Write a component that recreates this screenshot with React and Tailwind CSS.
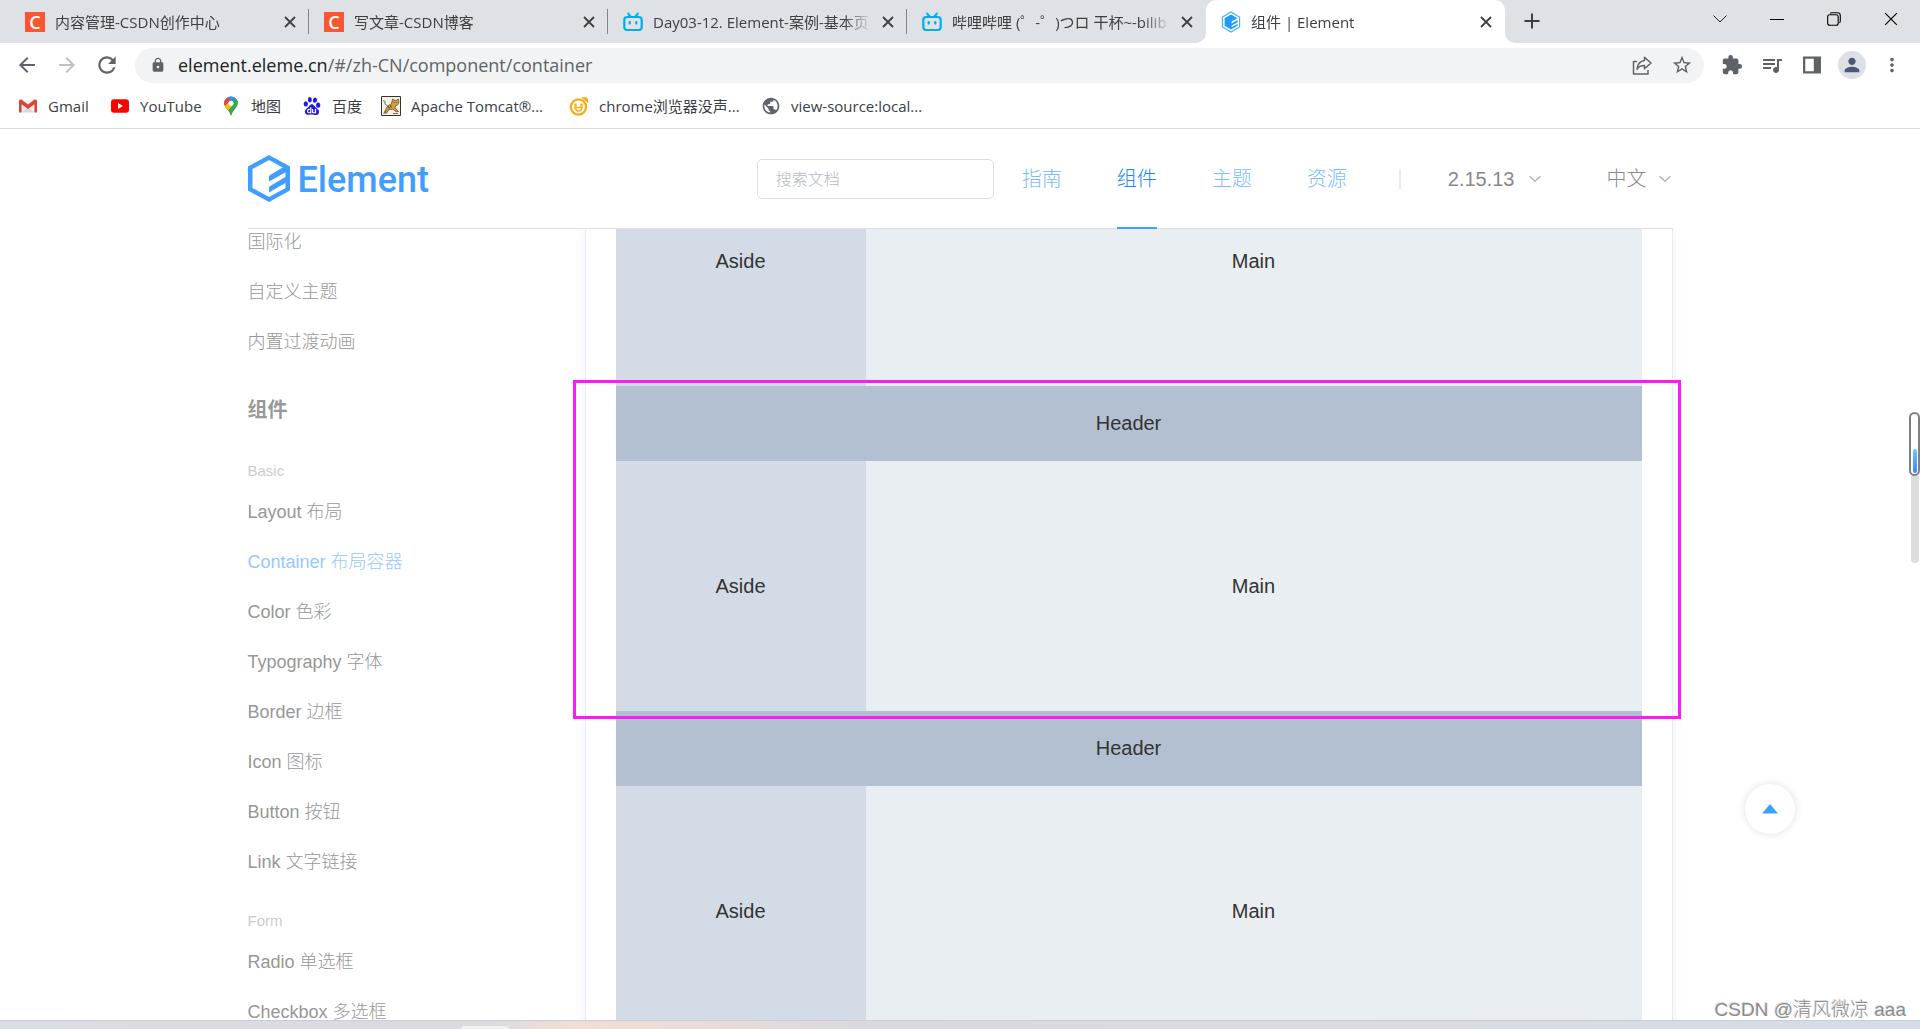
import React from "react";
import {
  MdArrowBack,
  MdArrowForward,
  MdRefresh,
  MdLock,
  MdStarBorder,
  MdExtension,
  MdQueueMusic,
  MdPerson,
  MdMoreVert,
  MdPublic,
} from "react-icons/md";
import { SiBaidu } from "react-icons/si";

const uiFont = "font-['Open_Sans','Noto_Sans_CJK_SC',sans-serif]";
const pageFont = "font-['Liberation_Sans','Noto_Sans_CJK_SC',sans-serif]";

/* ---------- small drawings ---------- */

function CsdnIcon() {
  return (
    <span className="flex size-5 shrink-0 items-center justify-center bg-[#fc5531] font-['Open_Sans',sans-serif] text-lg leading-5 font-semibold text-white">
      C
    </span>
  );
}

function BilibiliIcon() {
  return (
    <svg viewBox="0 0 20 20" className="size-5 shrink-0" fill="none" stroke="#00aeec" strokeWidth="2.2" strokeLinecap="round">
      <rect x="1.3" y="5" width="17.4" height="13" rx="3" />
      <path d="M5.2 1.6 7.6 4.6M14.8 1.6 12.4 4.6M6.7 10v1.6M13.3 10v1.6" />
    </svg>
  );
}

function ElementIcon() {
  return (
    <svg viewBox="0 0 20 22" className="h-[22px] w-5 shrink-0">
      <path d="M10 1 18.6 6v10L10 21 1.4 16V6Z" fill="#fff" stroke="#3fb0ff" strokeWidth="1.1" />
      <path d="M10 3.4 16.4 7.2 10.6 10.6v1.8l6-3.4v2.3l-6 3.4v1.6l6-3.3v1.8L10 18.6 3.6 14.8V7.2Z" fill="#1e9bff" />
    </svg>
  );
}

function GmailIcon() {
  return (
    <svg viewBox="0 0 20 20" className="size-5">
      <path d="M2 4h16v12.5H2z" fill="#f2f2f2" />
      <path d="M4 16.5 10 10l6 6.5z" fill="#d9d9d9" />
      <path d="M1 5v11.5h2.6V8.2L10 13l6.4-4.8v8.3H19V5c0-1.6-1.7-2-2.8-1.2L10 8.6 3.8 3.8C2.7 3 1 3.4 1 5Z" fill="#dc4437" />
    </svg>
  );
}

function YoutubeIcon() {
  return (
    <svg viewBox="0 0 20 20" className="size-5">
      <rect x="1" y="3.3" width="18" height="13.4" rx="3" fill="#f00" />
      <path d="M8 7v6l5-3z" fill="#fff" />
    </svg>
  );
}

function MapsIcon() {
  return (
    <svg viewBox="0 0 20 20" className="size-5">
      <clipPath id="pin">
        <path d="M10 .5a6.8 6.8 0 0 0-6.8 6.8c0 2.7 1.4 4 3 6 1.5 2 2.6 3.3 3.2 5.6.3.9.9.9 1.2 0 .6-2.3 1.7-3.6 3.2-5.6 1.6-2 3-3.3 3-6A6.8 6.8 0 0 0 10 .5Z" />
      </clipPath>
      <g clipPath="url(#pin)">
        <path d="M0 0h20v20H0z" fill="#34a853" />
        <path d="M12 0h8v7l-6-1z" fill="#4285f4" />
        <path d="M4 2 11-1l3 3-8 8-4-3z" fill="#4285f4" />
        <path d="M0 0h5.5L9 5 2 12z" fill="#ea4335" />
        <path d="M2 12 15 3l3 4L6 16z" fill="#34a853" />
        <path d="M2 12 8 6l4 3-6 7z" fill="#fbbc04" />
      </g>
      <circle cx="10" cy="7.3" r="2.5" fill="#fff" />
    </svg>
  );
}

function TomcatIcon() {
  return (
    <svg viewBox="0 0 20 20" className="size-5">
      <path d="M.5.5h19v19H.5z" fill="#f4f1e6" stroke="#333" />
      <path d="M11 5.5 11.5 3l2 1.3h2.2L17.5 3l.3 3.2c0 2-1.500 3.200-3 3.500l-.8 2 3.500 3.800-2.500.3-3-2.600-4 .3-2.500 3.700-2.500-.2 2.300-4.500c.5-2 2.200-3.200 5-4.500z" fill="#d2a041" stroke="#54431f" strokeWidth=".7" />
      <path d="M13 6v.8M15.8 6v.8M7.5 10.5l.8 2M9.5 9.5l.8 2" stroke="#222" strokeWidth=".9" />
      <path d="M2 5c1.5-1 2.500.5 2 2s1 2 3 3M2.500 17.500l3-3M12 17.500h5" fill="none" stroke="#66604a" strokeWidth=".9" />
    </svg>
  );
}

function OrangeFaceIcon() {
  return (
    <svg viewBox="0 0 20 20" className="size-5" fill="none" stroke="#fbab18">
      <circle cx="9.5" cy="11" r="7.6" strokeWidth="2.2" />
      <path d="M13 1.5 18 2l.8 4.5z" fill="#fbab18" />
      <path d="M6.5 7.5v3M12.5 7.5v3" strokeWidth="2.4" />
      <path d="M5 11.5h9M6.3 12c.5 4 5.900 4 6.400 0" strokeWidth="1.6" />
    </svg>
  );
}

function ShareIcon() {
  return (
    <svg viewBox="0 0 22 22" className="size-[22px]" fill="none" stroke="#5f6368" strokeWidth="1.5" strokeLinejoin="round">
      <path d="M6 7.5H2.5V20H17v-4" />
      <path d="M13.5 3.2 20 9l-6.5 5.8V11.6c-3.5 0-5.700 1-7.500 3.600.5-4.500 3-8 7.500-8.600z" />
    </svg>
  );
}

function SidePanelIcon() {
  return (
    <svg viewBox="0 0 20 20" className="size-5">
      <path d="M1 1.5h18v17H1zM3.3 3.8v12.4h8.5V3.8z" fill="#5f6368" fillRule="evenodd" />
    </svg>
  );
}

function Cross({ className, width }) {
  return (
    <svg viewBox="0 0 12 12" className={className} stroke="currentColor" strokeWidth={width}>
      <path d="m1 1 10 10M11 1 1 11" />
    </svg>
  );
}

function Chevron() {
  return (
    <svg viewBox="0 0 12 8" className="h-2 w-3" fill="none" stroke="#aaa" strokeWidth="1.2">
      <path d="m.6 1.2 5.4 5 5.4-5" />
    </svg>
  );
}

/* ---------- browser chrome ---------- */

const tabs = [
  { title: "内容管理-CSDN创作中心", icon: <CsdnIcon /> },
  { title: "写文章-CSDN博客", icon: <CsdnIcon /> },
  { title: "Day03-12. Element-案例-基本页", icon: <BilibiliIcon /> },
  { title: "哔哩哔哩 (゜-゜)つロ 干杯~-bilib", icon: <BilibiliIcon />, last: true },
  { title: "组件 | Element", icon: <ElementIcon />, active: true },
];

function Tab({ tab }) {
  return (
    <div
      className={
        "relative flex h-[43px] w-[299px] min-w-0 items-center pr-[9px] pl-[15px] " +
        (tab.active ? "rounded-t-[10px] bg-white" : "")
      }
    >
      {tab.active && (
        <>
          <span className="absolute bottom-0 -left-2.5 size-2.5 bg-white" />
          <span className="absolute bottom-0 -left-2.5 size-2.5 rounded-br-[10px] bg-[#dee1e6]" />
          <span className="absolute -right-2.5 bottom-0 size-2.5 bg-white" />
          <span className="absolute -right-2.5 bottom-0 size-2.5 rounded-bl-[10px] bg-[#dee1e6]" />
        </>
      )}
      {tab.icon}
      <span className="ml-2.5 min-w-0 flex-1 overflow-hidden text-[15px] leading-6 whitespace-nowrap text-[#3c4043] [mask-image:linear-gradient(to_right,black_calc(100%-28px),transparent)]">
        {tab.title}
      </span>
      <button type="button" aria-label="关闭标签页" className="ml-1.5 flex size-5 items-center justify-center text-[#3c4043]">
        <Cross className="size-3" width="1.8" />
      </button>
      {!tab.active && !tab.last && <span className="absolute top-[9px] right-0 h-[25px] w-px bg-[#80868b]" />}
    </div>
  );
}

function WindowButton({ label, children }) {
  return (
    <button type="button" aria-label={label} className="flex h-[38px] w-[57px] items-center justify-center">
      {children}
    </button>
  );
}

function TabStrip() {
  return (
    <div className="flex h-[43px] justify-between bg-[#dee1e6]">
      <div className="flex min-w-0 pl-[10px]">
        {tabs.map((t) => (
          <Tab key={t.title} tab={t} />
        ))}
        <button type="button" aria-label="新标签页" className="ml-[11px] flex h-[42px] w-8 items-center justify-center">
          <svg viewBox="0 0 16 16" className="size-4" stroke="#3c4043" strokeWidth="2">
            <path d="M8 .5v15M.5 8h15" />
          </svg>
        </button>
      </div>
      <div className="flex pr-px">
        <WindowButton label="搜索标签页">
          <svg viewBox="0 0 14 8" className="h-2 w-3.5" fill="none" stroke="#222">
            <path d="m.5.5 6.5 6.5L13.5.5" />
          </svg>
        </WindowButton>
        <WindowButton label="最小化">
          <span className="h-px w-3.5 bg-black" />
        </WindowButton>
        <WindowButton label="还原">
          <svg viewBox="0 0 14 14" className="size-3.5" fill="none" stroke="#000" strokeWidth="1.1">
            <rect x=".7" y="2.7" width="10.5" height="10.5" rx="2" />
            <path d="M3.2 1.5C3.6.9 4.2.7 5 .7h5.5c1.8 0 2.8 1 2.8 2.8V9c0 .8-.3 1.4-.9 1.8" />
          </svg>
        </WindowButton>
        <WindowButton label="关闭">
          <Cross className="size-3.5" width="1" />
        </WindowButton>
      </div>
    </div>
  );
}

function ToolButton({ label, children }) {
  return (
    <button type="button" aria-label={label} className="flex size-10 shrink-0 items-center justify-center text-[#5f6368]">
      {children}
    </button>
  );
}

function Toolbar() {
  return (
    <div className="flex h-11 items-center bg-white pr-2 pl-[7px]">
      <ToolButton label="后退"><MdArrowBack className="size-6" /></ToolButton>
      <ToolButton label="前进"><MdArrowForward className="size-6 text-[#bdc1c6]" /></ToolButton>
      <ToolButton label="重新加载"><MdRefresh className="size-[26px]" /></ToolButton>
      <div className="ml-2 flex h-[35px] min-w-0 flex-1 items-center rounded-full bg-[#f1f3f4] pr-0.5 pl-[15px]">
        <MdLock className="size-4 text-[#5f6368]" />
        <div className="ml-3 flex-1 truncate text-[18px] leading-7 text-[#5f6368]">
          <span className="text-[#202124]">element.eleme.cn</span>/#/zh-CN/component/container
        </div>
        <ToolButton label="分享"><ShareIcon /></ToolButton>
        <ToolButton label="收藏"><MdStarBorder className="size-[22px]" /></ToolButton>
      </div>
      <div className="ml-2 flex">
        <ToolButton label="扩展程序"><MdExtension className="size-[22px]" /></ToolButton>
        <ToolButton label="媒体控件"><MdQueueMusic className="size-6" /></ToolButton>
        <ToolButton label="侧边栏"><SidePanelIcon /></ToolButton>
        <ToolButton label="用户">
          <span className="flex size-7 items-center justify-center rounded-full bg-[#dde1e7] text-[#4a5a74]">
            <MdPerson className="size-[22px]" />
          </span>
        </ToolButton>
        <ToolButton label="菜单"><MdMoreVert className="size-[22px]" /></ToolButton>
      </div>
    </div>
  );
}

const bookmarks = [
  { label: "Gmail", icon: <GmailIcon />, w: "w-[92px]" },
  { label: "YouTube", icon: <YoutubeIcon />, w: "w-[111px]" },
  { label: "地图", icon: <MapsIcon />, w: "w-[81px]" },
  { label: "百度", icon: <SiBaidu className="size-[18px] text-[#2319dc]" />, w: "w-[79px]" },
  { label: "Apache Tomcat®...", icon: <TomcatIcon />, w: "w-[188px]" },
  { label: "chrome浏览器没声...", icon: <OrangeFaceIcon />, w: "w-[192px]" },
  { label: "view-source:local...", icon: <MdPublic className="size-[22px] text-[#5f6368]" />, w: "w-[180px]" },
];

function BookmarkBar() {
  return (
    <nav className="flex h-[42px] items-center border-b border-[#d9dbde] bg-white pb-1 pl-[18px]">
      {bookmarks.map((b) => (
        <a key={b.label} href="#" className={"flex shrink-0 items-center whitespace-nowrap " + b.w}>
          <span className="flex w-5 justify-center">{b.icon}</span>
          <span className="ml-2.5 text-[15px] leading-6 text-[#3c4043]">{b.label}</span>
        </a>
      ))}
    </nav>
  );
}

/* ---------- documentation page ---------- */

function Logo() {
  return (
    <a href="#" className="flex items-center text-[#409eff]" aria-label="Element">
      <svg viewBox="0 0 42 47" className="h-[47px] w-[42px]" fill="currentColor">
        <path fillRule="evenodd" d="M21 0 42 11.5V35.5L21 47 0 35.5V11.5ZM21 5 4.5 14V33L21 42 37.5 33V14Z" />
        <path d="M21 22.5C21 21 21.6 20.2 23 19.4L35.5 12 39 13V16.500L21 26.500ZM21 33.500C21 32 21.600 31.200 23 30.400L39 21V27L21 37.500Z" />
      </svg>
      <span className="mt-0.5 ml-2 font-['Roboto',sans-serif] text-[36px] leading-10 font-medium">Element</span>
    </a>
  );
}

const navLinks = ["指南", "组件", "主题", "资源"];

function SiteHeader() {
  return (
    <header className="mx-auto flex h-[100px] w-full max-w-[1425px] shrink-0 items-center justify-between border-b border-[#dcdfe6]">
      <Logo />
      <div className="flex h-full items-center pr-0.5 text-[20px] font-light">
        <input
          type="text"
          aria-label="搜索文档"
          placeholder="搜索文档"
          className="h-10 w-[237px] rounded-[5px] border border-[#dcdfe6] px-[18px] pt-0.5 text-[16px] placeholder:text-[#b4b9c2]"
        />
        <nav className="ml-7 flex h-full gap-[55px]">
          {navLinks.map((l) => (
            <a
              key={l}
              href="#"
              className={
                "-mb-px flex h-[100px] items-center border-y-2 border-t-transparent " +
                (l === "组件" ? "border-b-[#409eff] text-[#1989fa]" : "border-b-transparent text-[#7dbcff]")
              }
            >
              {l}
            </a>
          ))}
        </nav>
        <span className="ml-[52px] h-5 w-0.5 bg-[#ebebeb]" />
        <button type="button" className="ml-[47px] flex items-center gap-3.5 text-[#888]">
          2.15.13 <Chevron />
        </button>
        <button type="button" className="ml-[66px] flex items-center gap-3 text-[#888]">
          中文 <Chevron />
        </button>
      </div>
    </header>
  );
}

function SideLink({ children, active }) {
  return (
    <li>
      <a href="#" className={"block h-[50px] text-[18px] leading-[50px] " + (active ? "text-[#94c9ff]" : "text-[#979797]")}>
        {children}
      </a>
    </li>
  );
}

const basic = ["Layout 布局", "Container 布局容器", "Color 色彩", "Typography 字体", "Border 边框", "Icon 图标", "Button 按钮", "Link 文字链接"];

function Sidebar() {
  return (
    <nav className="w-[337px] shrink-0 font-light">
      <ul className="-mt-3">
        {["国际化", "自定义主题", "内置过渡动画"].map((t) => (
          <SideLink key={t}>{t}</SideLink>
        ))}
      </ul>
      <h2 className="mt-[18px] text-[20px] leading-[50px] font-bold text-[#999]">组件</h2>
      <h3 className="mt-5 text-[15px] leading-8 text-[#ccc]">Basic</h3>
      <ul>
        {basic.map((t) => (
          <SideLink key={t} active={t.startsWith("Container")}>{t}</SideLink>
        ))}
      </ul>
      <h3 className="mt-[18px] text-[15px] leading-8 text-[#ccc]">Form</h3>
      <ul>
        <SideLink>Radio 单选框</SideLink>
        <SideLink>Checkbox 多选框</SideLink>
      </ul>
    </nav>
  );
}

function DemoContainer({ header = true, marked }) {
  return (
    <section className="relative text-center text-[20px] text-[#333]">
      {header && <div className="h-[75px] bg-[#b3c0d1] leading-[75px]">Header</div>}
      <div className="flex h-[250px] leading-[250px]">
        <div className="w-[250px] shrink-0 bg-[#d3dce6]">Aside</div>
        <div className="flex-1 bg-[#e9eef3]">Main</div>
      </div>
      {marked && (
        <span className="pointer-events-none absolute -top-1.5 -right-[39px] -bottom-2 -left-[43px] z-10 border-3 border-[#f81cf8]" />
      )}
    </section>
  );
}

function Body() {
  return (
    <div className="min-h-0 flex-1 overflow-hidden">
      <div className="mx-auto flex w-full max-w-[1425px]">
        <Sidebar />
        <main className="flex-1 border-x border-[#e8ebf1] px-[30px] shadow-[0_0_10px_rgba(232,237,250,0.7)]">
          <div className="-mt-[93px]">
            <DemoContainer header={false} />
            <DemoContainer marked />
            <DemoContainer />
          </div>
        </main>
      </div>
    </div>
  );
}

export default function App() {
  return (
    <div className={"relative flex h-screen flex-col overflow-hidden bg-white " + pageFont}>
      <div className={"shrink-0 " + uiFont}>
        <TabStrip />
        <Toolbar />
        <BookmarkBar />
      </div>
      <SiteHeader />
      <Body />
      <footer className="flex h-[9px] shrink-0 items-end border-t border-[#cccdd2] bg-[linear-gradient(to_right,#dadde3_0%,#dadbe0_25%,#f1dfd6_30%,#ecdcd8_35%,#d9dade_45%,#dadbe0_70%,#d5dde6_100%)]">
        <span className="ml-[24%] h-[3px] w-12 rounded-t-sm bg-[#f1f0f2]" />
      </footer>

      <button
        type="button"
        aria-label="回到顶部"
        className="absolute right-[125px] bottom-[195px] flex size-[50px] items-center justify-center rounded-full bg-white shadow-[0_0_8px_rgba(0,0,0,0.12)]"
      >
        <svg viewBox="0 0 16 10" className="h-2.5 w-4">
          <path d="M8 0 16 9.5H0Z" fill="#409eff" />
        </svg>
      </button>

      <div className="absolute top-[412px] right-0 flex w-[11px] flex-col items-center">
        <div className="flex h-16 w-[11px] flex-col items-center justify-end rounded-full border-2 border-[#808080] bg-white pb-px">
          <span className="h-6 w-1 rounded-sm bg-linear-to-b from-[#72c5ff] to-[#3b87fb]" />
        </div>
        <div className="h-[87px] w-2 rounded-b-full bg-[#dcdddf]" />
      </div>

      <div className="absolute right-[14px] bottom-[5px] text-[19px] leading-7 font-light text-[#8c8c8c] [text-shadow:1px_1px_0_#fff,-1px_-1px_0_#ddd]">
        CSDN @清风微凉 aaa
      </div>
    </div>
  );
}
